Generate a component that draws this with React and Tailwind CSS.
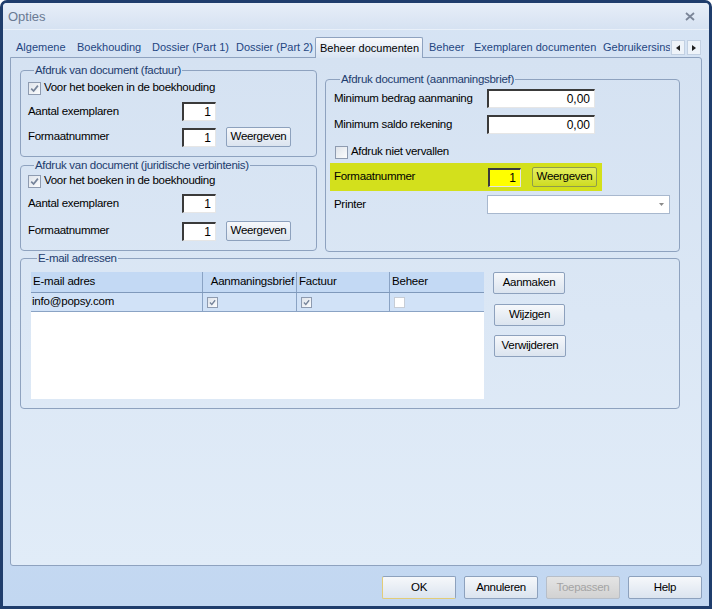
import React from 'react';

const lbl = 'text-[11.5px] tracking-[-0.3px] text-black';

function Check({ checked = false, size = 13 }) {
  return (
    <span
      className="flex shrink-0 items-center justify-center border border-[#8e9bb0] bg-gradient-to-br from-[#dfe4eb] to-[#fbfcfd]"
      style={{ width: size, height: size }}
    >
      {checked && (
        <svg width={size - 4} height={size - 4} viewBox="0 0 9 9">
          <path d="M1.2 4.6 L3.6 7 L7.9 1.6" stroke="#76849a" strokeWidth="1.7" fill="none" />
        </svg>
      )}
    </span>
  );
}

function NumBox({ value, className = '' }) {
  return (
    <div
      className={`flex h-[19px] items-center justify-end border-t-2 border-l-2 border-r border-b border-t-[#3a3a3a] border-l-[#3a3a3a] border-r-[#e6e6e6] border-b-[#e6e6e6] pr-[4px] text-[12px] leading-none text-black ${className}`}
    >
      {value}
    </div>
  );
}

function Btn({ children, className = '' }) {
  return (
    <div
      className={`flex items-center justify-center rounded-[2px] border border-[#8da1bd] bg-gradient-to-b from-[#f6f8fb] to-[#dbe4ef] text-[11.5px] leading-none tracking-[-0.3px] text-black ${className}`}
    >
      {children}
    </div>
  );
}

function Group({ title, className = '', children }) {
  return (
    <fieldset className={`rounded-[4px] border border-[#8ea2bf] ${className}`}>
      <legend className="ml-[6px] px-[1px] text-[11.5px] leading-[13px] tracking-[-0.3px] text-[#1d3c6e]">{title}</legend>
      {children}
    </fieldset>
  );
}

function PrintGroup({ title, className = '', tight = false }) {
  return (
    <Group title={title} className={`pl-[7px] pb-[9px] ${className}`}>
      <div className={`flex h-[14px] items-center gap-[3px] ${tight ? 'mt-[2px]' : 'mt-[4px]'}`}>
        <Check checked />
        <span className={lbl}>Voor het boeken in de boekhouding</span>
      </div>
      <div className={`flex h-[19px] items-center ${tight ? 'mt-[6px]' : 'mt-[7px]'}`}>
        <span className={`w-[154px] ${lbl}`}>Aantal exemplaren</span>
        <NumBox value="1" className="w-[34px] bg-white" />
      </div>
      <div className={`flex h-[20px] items-center ${tight ? 'mt-[8px]' : 'mt-[6px]'}`}>
        <span className={`w-[154px] ${lbl}`}>Formaatnummer</span>
        <NumBox value="1" className="w-[34px] bg-white" />
        <Btn className="ml-[10px] h-[20px] w-[65px]">Weergeven</Btn>
      </div>
    </Group>
  );
}

const tabs = [
  { label: 'Algemene', w: 'w-[61px]' },
  { label: 'Boekhouding', w: 'w-[75px]' },
  { label: 'Dossier (Part 1)', w: 'w-[84px]' },
  { label: 'Dossier (Part 2)', w: 'w-[85px]' },
  { label: 'Beheer documenten', w: 'w-[108px]', active: true },
  { label: 'Beheer', w: 'w-[45px]' },
  { label: 'Exemplaren documenten', w: 'w-[129px]' },
  { label: 'Gebruikersinstellingen', w: 'w-[73px]' },
];

export default function App() {
  return (
    <div className="flex h-[609px] w-[712px] flex-col overflow-hidden rounded-t-[7px] border-[3px] border-[#1f3d6c] bg-gradient-to-b from-[#d7e4f4] to-[#c2d7f1] font-['Liberation_Sans',Arial,sans-serif]">
      {/* title bar */}
      <div className="flex h-[27px] shrink-0 items-center justify-between border-b border-[#e9f0f9] bg-gradient-to-b from-[#e7eef8] to-[#d6e2f2] pl-[5px] pr-[14px]">
        <span className="mt-[2px] text-[13px] text-[#6a7a93]">Opties</span>
        <svg width="10" height="9" viewBox="0 0 10 9">
          <path d="M1 1 L9 8 M9 1 L1 8" stroke="#7b8598" strokeWidth="1.8" />
        </svg>
      </div>

      <div className="flex flex-1 flex-col px-[7px]">
        {/* tab strip */}
        <div className="relative z-10 mt-[7px] flex h-[20px] items-end">
          {tabs.map((t) =>
            t.active ? (
              <div
                key={t.label}
                className={`-mb-[1px] flex h-[21px] shrink-0 items-center rounded-t-[2px] border border-b-0 border-[#8ea2bf] bg-gradient-to-b from-[#f7f9fc] to-[#d8e4f3] pl-[4px] text-[11px] whitespace-nowrap text-black ${t.w}`}
              >
                {t.label}
              </div>
            ) : (
              <div
                key={t.label}
                className={`flex h-[20px] shrink-0 items-center overflow-hidden pl-[6px] text-[11px] whitespace-nowrap text-[#1f4682] ${t.w}`}
              >
                {t.label}
              </div>
            )
          )}
          <div className="mb-[2px] ml-[1px] flex gap-[2px]">
            <div className="flex h-[15px] w-[14px] items-center justify-center border border-[#c2d0e2] bg-[#eef3f9]">
              <svg width="4" height="6" viewBox="0 0 4 6"><path d="M4 0 L0 3 L4 6 Z" fill="#202020" /></svg>
            </div>
            <div className="flex h-[15px] w-[14px] items-center justify-center border border-[#c2d0e2] bg-[#eef3f9]">
              <svg width="4" height="6" viewBox="0 0 4 6"><path d="M0 0 L4 3 L0 6 Z" fill="#202020" /></svg>
            </div>
          </div>
        </div>

        {/* tab panel */}
        <div className="h-[509px] shrink-0 rounded-b-[3px] rounded-tr-[3px] border border-[#8ea2bf] bg-gradient-to-b from-[#d5e2f2] to-[#e1ecf8] pl-[9px] pt-[6px]">
          <div className="flex items-start">
            <div className="flex w-[297px] flex-col">
              <PrintGroup title="Afdruk van document (factuur)" />
              <PrintGroup title="Afdruk van document (juridische verbintenis)" className="mt-[2px]" tight />
            </div>

            <Group title="Afdruk document (aanmaningsbrief)" className="ml-[8px] mt-[9px] w-[355px] pb-[37px] pl-[8px]">
              <div className="mt-[3px] flex h-[19px] items-center">
                <span className={`w-[153px] ${lbl}`}>Minimum bedrag aanmaning</span>
                <NumBox value="0,00" className="w-[108px] bg-white" />
              </div>
              <div className="mt-[7px] flex h-[19px] items-center">
                <span className={`w-[153px] ${lbl}`}>Minimum saldo rekening</span>
                <NumBox value="0,00" className="w-[108px] bg-white" />
              </div>
              <div className="mt-[8px] flex h-[20px] items-center gap-[3px] pl-[1px]">
                <Check />
                <span className={lbl}>Afdruk niet vervallen</span>
              </div>
              <div className="-ml-[4px] mt-[1px] flex h-[28px] w-[272px] items-center bg-[#d3e01c] pl-[4px]">
                <span className={`w-[154px] ${lbl}`}>Formaatnummer</span>
                <NumBox value="1" className="w-[33px] bg-[#ffff00]" />
                <div className="ml-[11px] flex h-[20px] w-[65px] items-center justify-center rounded-[2px] border border-[#8f9c4c] bg-gradient-to-b from-[#e4ee5a] to-[#cfdc1e] text-[11.5px] leading-none tracking-[-0.3px] text-black">
                  Weergeven
                </div>
              </div>
              <div className="mt-[4px] flex h-[19px] items-center">
                <span className={`w-[153px] ${lbl}`}>Printer</span>
                <div className="flex h-[19px] w-[183px] items-center justify-end border border-[#a8b8ce] bg-white pr-[5px]">
                  <svg width="5" height="3" viewBox="0 0 5 3"><path d="M0 0 L5 0 L2.5 3 Z" fill="#8a8a8a" /></svg>
                </div>
              </div>
            </Group>
          </div>

          <Group title="E-mail adressen" className="w-[660px] pb-[9px] pl-[10px]">
            <div className="mt-[7px] flex items-start">
              <div className="h-[127px] w-[453px] bg-white text-[11.5px] tracking-[-0.2px] text-black">
                <div className="flex h-[21px] border-b border-[#7f99bb] bg-[#c3d9f4]">
                  <div className="flex w-[171px] items-center pl-[2px]">E-mail adres</div>
                  <div className="flex w-[94px] items-center justify-end border-l border-[#8aa3c4] pr-[2px]">Aanmaningsbrief</div>
                  <div className="flex w-[93px] items-center border-l border-[#8aa3c4] pl-[2px]">Factuur</div>
                  <div className="flex w-[95px] items-center border-l border-[#8aa3c4] pl-[2px]">Beheer</div>
                </div>
                <div className="flex h-[19px] border-b border-[#8aa3c4] bg-[#d1e2f7]">
                  <div className="flex w-[171px] items-center pl-[1px]">info@popsy.com</div>
                  <div className="flex w-[94px] items-center border-l border-[#8aa3c4] pl-[4px]">
                    <Check checked size={11} />
                  </div>
                  <div className="flex w-[93px] items-center border-l border-[#8aa3c4] pl-[4px]">
                    <Check checked size={11} />
                  </div>
                  <div className="flex w-[95px] items-center border-l border-[#8aa3c4] pl-[4px]">
                    <span className="h-[11px] w-[11px] border border-[#c7cdd6] bg-white" />
                  </div>
                </div>
              </div>
              <div className="ml-[9px] flex flex-col">
                <Btn className="h-[22px] w-[72px]">Aanmaken</Btn>
                <Btn className="mt-[10px] ml-[1px] h-[22px] w-[71px]">Wijzigen</Btn>
                <Btn className="mt-[9px] ml-[1px] h-[22px] w-[72px]">Verwijderen</Btn>
              </div>
            </div>
          </Group>
        </div>

        {/* bottom buttons */}
        <div className="mt-[10px] flex justify-end gap-[8px]">
          <div className="flex h-[23px] w-[74px] items-center justify-center rounded-[2px] border border-[#8da1bd] border-b-[#e2cc78] border-l-[#e2cc78] bg-gradient-to-b from-[#f6f8fb] to-[#dbe4ef] text-[11.5px] tracking-[-0.3px] text-black">
            OK
          </div>
          <Btn className="h-[23px] w-[74px]">Annuleren</Btn>
          <div className="flex h-[23px] w-[74px] items-center justify-center rounded-[2px] border border-[#b7bec8] bg-gradient-to-b from-[#e4e4e4] to-[#d2d2d2] text-[11.5px] tracking-[-0.3px] text-[#a4a4a4]">
            Toepassen
          </div>
          <Btn className="h-[23px] w-[74px]">Help</Btn>
        </div>
      </div>
    </div>
  );
}
